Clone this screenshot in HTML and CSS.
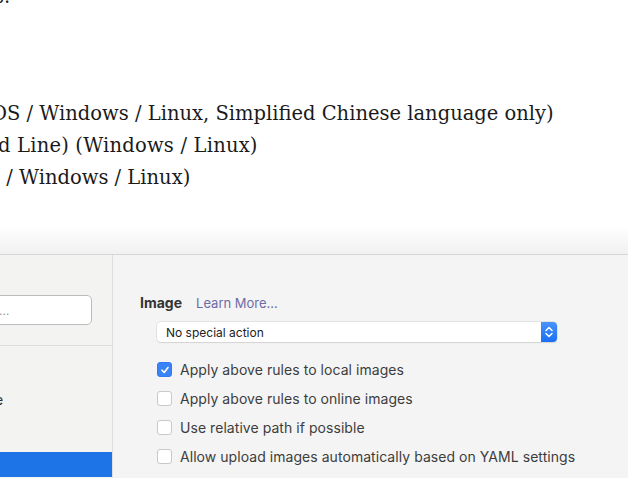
FILE: index.html
```html
<!DOCTYPE html>
<html>
<head>
<meta charset="utf-8">
<link rel="stylesheet" href="styles.css">
</head>
<body>
<div class="doc">
  <p class="frag">s.</p>
  <p class="line l1">OS / Windows / Linux, Simplified Chinese language only)</p>
  <p class="line l2">d Line) (Windows / Linux)</p>
  <p class="line l3">s / Windows / Linux)</p>
</div>
<div class="shot">
  <div class="fade"></div>
  <div class="window">
    <aside class="sidebar">
      <div class="search"><span class="ph">…</span></div>
      <div class="sep"></div>
      <div class="item">e</div>
      <div class="item selected"></div>
    </aside>
    <main class="pane">
      <div class="heading"><span class="title">Image</span><span class="link">Learn More…</span></div>
      <div class="select">
        <span class="sel-text">No special action</span>
        <span class="stepper">
          <svg width="10" height="14" viewBox="0 0 10 14"><path d="M2 5.5 L5 2.5 L8 5.5 M2 8.5 L5 11.5 L8 8.5" fill="none" stroke="#fff" stroke-width="1.5" stroke-linecap="round" stroke-linejoin="round"/></svg>
        </span>
      </div>
      <ul class="checks">
        <li><span class="box checked"><svg width="10" height="10" viewBox="0 0 10 10"><path d="M2 5.2 L4.2 7.5 L8 2.5" fill="none" stroke="#fff" stroke-width="1.6" stroke-linecap="round" stroke-linejoin="round"/></svg></span>Apply above rules to local images</li>
        <li><span class="box"></span>Apply above rules to online images</li>
        <li><span class="box"></span>Use relative path if possible</li>
        <li><span class="box"></span>Allow upload images automatically based on YAML settings</li>
        <li><span class="box"></span></li>
      </ul>
    </main>
  </div>
</div>
</body>
</html>
```
FILE: styles.css
```css
html, body {
  margin: 0;
  padding: 0;
}
body {
  width: 628px;
  height: 478px;
  overflow: hidden;
  background: #ffffff;
}
.doc {
  height: 226px;
  overflow: hidden;
  font-family: "DejaVu Serif", "Liberation Serif", serif;
  font-size: 19.5px;
  color: #1a1a1a;
}
.doc p {
  margin: 0;
  white-space: nowrap;
}
.frag {
  line-height: 32px;
  margin-top: -19px !important;
  margin-left: -6px !important;
}
.line {
  line-height: 32px;
}
.l1 {
  margin-top: 85px !important;
  margin-left: -9px !important;
}
.l2 {
  margin-left: -2px !important;
  letter-spacing: 0.2px;
}
.l3 {
  margin-left: -10px !important;
}
.shot {
  height: 252px;
  display: flex;
  flex-direction: column;
}
.fade {
  flex-shrink: 0;
  height: 28px;
  background: linear-gradient(#ffffff, #f1f1f1);
  border-bottom: 1px solid #d6d6d6;
}
.window {
  flex: 1;
  min-height: 0;
  overflow: hidden;
  display: flex;
  font-family: Inter, "Noto Sans", sans-serif;
}
.sidebar {
  width: 112px;
  background: #f3f3f2;
  border-right: 1px solid #dedede;
  display: flex;
  flex-direction: column;
  overflow: hidden;
}
.search {
  flex-shrink: 0;
  margin: 40px 20px 0 -20px;
  height: 28px;
  background: #fff;
  border: 1px solid #bcbcbc;
  border-radius: 5px;
  display: flex;
  align-items: center;
  padding-left: 18px;
}
.ph {
  color: #9a9a9a;
  font-size: 12px;
}
.sep {
  flex-shrink: 0;
  margin-top: 20px;
  height: 1px;
  background: #dcdcdc;
}
.item {
  flex-shrink: 0;
  height: 106px;
  display: flex;
  align-items: center;
  margin-left: -5px;
  font-size: 14px;
  color: #2a2a2a;
}
.item.selected {
  height: 25px;
  margin-left: 0;
  background: #1d74e7;
}
.pane {
  flex: 1;
  background: #f4f4f4;
  padding: 40px 0 0 27px;
  display: flex;
  flex-direction: column;
  align-items: flex-start;
}
.heading {
  height: 16px;
  line-height: 16px;
  display: flex;
  align-items: baseline;
  gap: 14px;
}
.title {
  font-size: 14px;
  font-weight: 700;
  color: #333;
}
.link {
  font-size: 13px;
  color: #6d6ca6;
}
.select {
  flex-shrink: 0;
  margin: 11px 0 0 17px;
  width: 400px;
  height: 20px;
  background: #fff;
  border-radius: 4px;
  box-shadow: 0 0 0 0.5px #d2d2d2, 0 1px 1px rgba(0,0,0,0.12);
  display: flex;
  align-items: center;
  justify-content: space-between;
}
.sel-text {
  padding-left: 9px;
  font-size: 12px;
  color: #222;
}
.stepper {
  width: 16px;
  height: 20px;
  border-radius: 0 4px 4px 0;
  background: linear-gradient(#4a93fb, #1b6ff5);
  display: flex;
  align-items: center;
  justify-content: center;
}
.checks {
  list-style: none;
  margin: 13px 0 0 17px;
  padding: 0;
}
.checks li {
  height: 29px;
  display: flex;
  align-items: center;
  font-size: 14px;
  letter-spacing: 0.05px;
  color: #3d3d3d;
}
.box {
  flex-shrink: 0;
  width: 13px;
  height: 13px;
  border: 1px solid #c9c9c9;
  border-radius: 3px;
  background: #fff;
  margin-right: 8px;
  display: flex;
  align-items: center;
  justify-content: center;
  box-sizing: content-box;
}
.box.checked {
  background: #3a82f7;
  border-color: #3479ee;
}
```
